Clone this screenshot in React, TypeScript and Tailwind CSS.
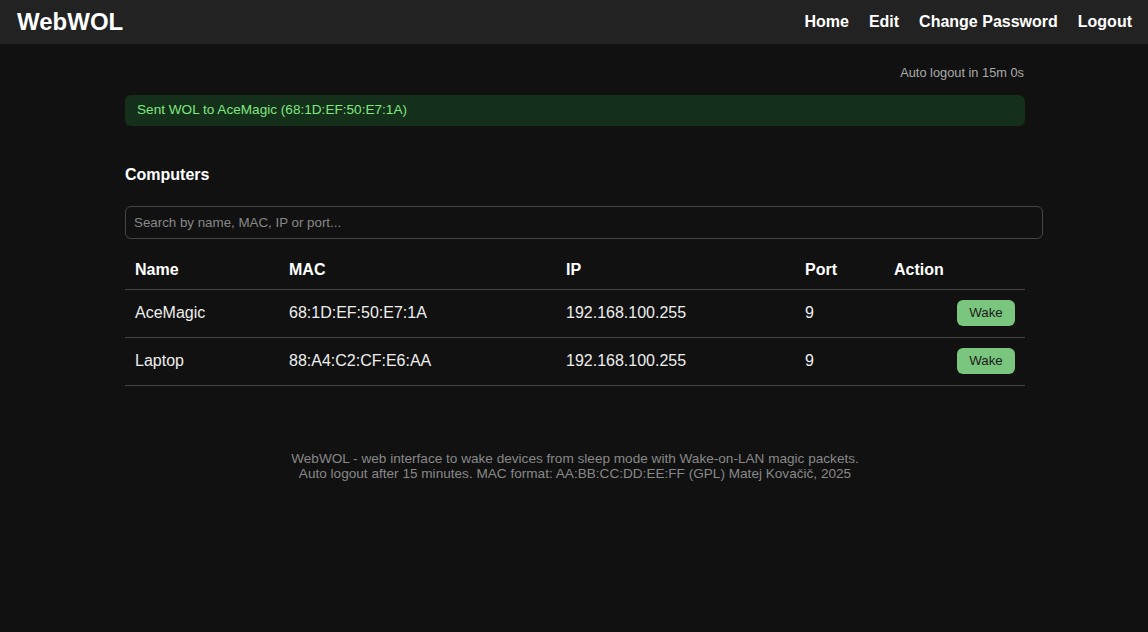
import React from "react";

const rows = [
  { name: "AceMagic", mac: "68:1D:EF:50:E7:1A", ip: "192.168.100.255", port: "9" },
  { name: "Laptop", mac: "88:A4:C2:CF:E6:AA", ip: "192.168.100.255", port: "9" },
];

export default function App() {
  return (
    <div
      className="min-h-[632px] bg-[#111111] text-[#eeeeee]"
      style={{ fontFamily: '"Liberation Sans", Arial, sans-serif' }}
    >
      <header className="h-[44px] bg-[#222222] flex items-center justify-between px-[17px] pr-4">
        <div className="text-[24px] font-bold text-white leading-none">WebWOL</div>
        <nav className="flex items-center gap-5 text-[16px] font-bold text-white">
          <a>Home</a>
          <a>Edit</a>
          <a>Change Password</a>
          <a>Logout</a>
        </nav>
      </header>
      <main className="w-[900px] ml-[125px] pt-[20px]">
        <div className="text-right text-[12.8px] text-[#aaaaaa] h-[17px] leading-[17px] pr-[1px]">
          Auto logout in 15m 0s
        </div>
        <div className="mt-[14px] h-[31px] rounded-[6px] bg-[#14301a] text-[#80e680] text-[13.6px] flex items-center px-3">
          Sent WOL to AceMagic (68:1D:EF:50:E7:1A)
        </div>
        <h2 className="mt-[39px] text-[16px] font-bold text-white leading-[20px]">Computers</h2>
        <input
          className="mt-[21px] w-[918px] h-[33px] rounded-[6px] border border-[#444444] bg-[#111111] px-2 text-[13.33px] text-[#dddddd] placeholder:text-[#888888] outline-none"
          placeholder="Search by name, MAC, IP or port..."
        />
        <table className="mt-[10px] w-[900px] border-collapse text-[16px]">
          <thead>
            <tr className="border-b border-[#444444] h-[40px]">
              <th className="text-left font-bold text-white pl-[10px] pt-[2px] w-[164px]">Name</th>
              <th className="text-left font-bold text-white pt-[2px] w-[277px]">MAC</th>
              <th className="text-left font-bold text-white pt-[2px] w-[239px]">IP</th>
              <th className="text-left font-bold text-white pt-[2px] w-[89px]">Port</th>
              <th className="text-left font-bold text-white pt-[2px]">Action</th>
            </tr>
          </thead>
          <tbody>
            {rows.map((r) => (
              <tr key={r.name} className="border-b border-[#444444] h-[48px]">
                <td className="pl-[10px] text-[#eeeeee]">{r.name}</td>
                <td className="text-[#eeeeee]">{r.mac}</td>
                <td className="text-[#eeeeee]">{r.ip}</td>
                <td className="text-[#eeeeee]">{r.port}</td>
                <td className="text-right pr-[10px]">
                  <button className="h-[26px] w-[58px] rounded-[6px] bg-[#7bc67f] text-[#1a1a1a] text-[13.33px]">
                    Wake
                  </button>
                </td>
              </tr>
            ))}
          </tbody>
        </table>
        <footer className="mt-[65px] text-center text-[13.6px] leading-[15px] text-[#888888]">
          <div>WebWOL - web interface to wake devices from sleep mode with Wake-on-LAN magic packets.</div>
          <div>Auto logout after 15 minutes. MAC format: AA:BB:CC:DD:EE:FF (GPL) Matej Kovačič, 2025</div>
        </footer>
      </main>
    </div>
  );
}
